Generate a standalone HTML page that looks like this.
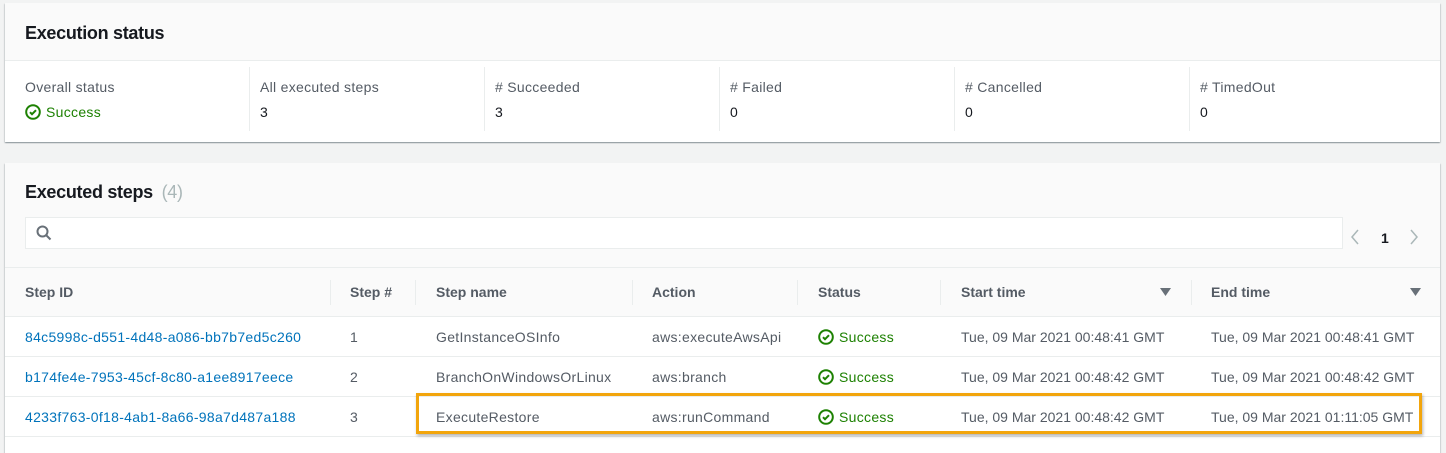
<!DOCTYPE html>
<html><head><style>
*{box-sizing:border-box;margin:0;padding:0}
body{width:1446px;height:442px;background:#f2f3f3;font-family:"Liberation Sans",sans-serif;font-size:14px;color:#16191f;position:relative;overflow:hidden;letter-spacing:0.3px}
.a{position:absolute}
.p{position:absolute;left:5px;width:1435px;background:#fff;box-shadow:0 1px 1px rgba(0,28,36,.3),1px 1px 1px rgba(0,28,36,.1),-1px 1px 1px rgba(0,28,36,.1)}
h2{font-size:18px;font-weight:bold;position:absolute;letter-spacing:-0.3px}
.lbl{color:#545b64}
.div{position:absolute;width:1px;background:#eaeded}
.th{position:absolute;top:284px;font-weight:bold;color:#545b64;letter-spacing:0}
.td{position:absolute;color:#545b64}
.dt{letter-spacing:0}
.g{color:#1d8102}
.lnk{color:#0073bb}
.hl{position:absolute;left:0;width:1435px;height:1px;background:#eaeded}
</style></head><body>
<div class="p" style="top:3px;height:139px">
 <div class="a" style="left:0;top:0;width:1435px;height:58px;background:#fafafa;border-bottom:1px solid #eaeded"></div>
 <h2 style="left:20px;top:20px">Execution status</h2>
 <div class="div" style="left:244px;top:64px;height:64px"></div>
 <div class="div" style="left:479px;top:64px;height:64px"></div>
 <div class="div" style="left:714px;top:64px;height:64px"></div>
 <div class="div" style="left:949px;top:64px;height:64px"></div>
 <div class="div" style="left:1184px;top:64px;height:64px"></div>
</div>
<div class="a lbl" style="left:25px;top:79px">Overall status</div>
<div class="a g" style="left:25px;top:104px"><svg width="16" height="16" viewBox="0 0 16 16" style="vertical-align:-3px;margin-right:5px"><circle cx="8" cy="8" r="6.8" fill="none" stroke="#1d8102" stroke-width="2"/><path d="M5 8.2l2 2 4-4" fill="none" stroke="#1d8102" stroke-width="2"/></svg>Success</div>
<div class="a lbl" style="left:260px;top:79px">All executed steps</div><div class="a" style="left:260px;top:104px">3</div>
<div class="a lbl" style="left:495px;top:79px"># Succeeded</div><div class="a" style="left:495px;top:104px">3</div>
<div class="a lbl" style="left:730px;top:79px"># Failed</div><div class="a" style="left:730px;top:104px">0</div>
<div class="a lbl" style="left:965px;top:79px"># Cancelled</div><div class="a" style="left:965px;top:104px">0</div>
<div class="a lbl" style="left:1200px;top:79px"># TimedOut</div><div class="a" style="left:1200px;top:104px">0</div>

<div class="p" style="top:163px;height:290px">
 <div class="a" style="left:0;top:0;width:1435px;height:153px;background:#fafafa"></div>
 <div class="hl" style="top:104px"></div>
 <div class="hl" style="top:153px"></div>
 <div class="hl" style="top:193px"></div>
 <div class="hl" style="top:233px"></div>
 <div class="hl" style="top:273px"></div>
 <h2 style="left:20px;top:19px">Executed steps <span style="font-weight:normal;color:#aab7b8;margin-left:4px">(4)</span></h2>
 <div class="a" style="left:20px;top:54px;width:1318px;height:32px;background:#fff;border:1px solid #eaeded"></div>
 <div class="div" style="left:325px;top:117px;height:25px"></div>
 <div class="div" style="left:410px;top:117px;height:25px"></div>
 <div class="div" style="left:627px;top:117px;height:25px"></div>
 <div class="div" style="left:792px;top:117px;height:25px"></div>
 <div class="div" style="left:935px;top:117px;height:25px"></div>
 <div class="div" style="left:1186px;top:117px;height:25px"></div>
</div>
<svg class="a" style="left:36px;top:225px" width="16" height="16" viewBox="0 0 16 16"><circle cx="6.5" cy="6.5" r="5" fill="none" stroke="#687078" stroke-width="2"/><path d="M10 10l4.5 4.5" stroke="#687078" stroke-width="2"/></svg>
<svg class="a" style="left:1349px;top:229px" width="12" height="16" viewBox="0 0 12 16"><path d="M9 1L3 8l6 7" fill="none" stroke="#aab7b8" stroke-width="1.5"/></svg>
<div class="a" style="left:1381px;top:230px;font-weight:bold">1</div>
<svg class="a" style="left:1408px;top:229px" width="12" height="16" viewBox="0 0 12 16"><path d="M3 1l6 7-6 7" fill="none" stroke="#aab7b8" stroke-width="1.5"/></svg>

<div class="th" style="left:25px">Step ID</div>
<div class="th" style="left:350px">Step #</div>
<div class="th" style="left:436px">Step name</div>
<div class="th" style="left:652px">Action</div>
<div class="th" style="left:818px">Status</div>
<div class="th" style="left:961px">Start time</div>
<div class="th" style="left:1211px">End time</div>
<svg class="a" style="left:1160px;top:288px" width="11" height="8"><path d="M0 0h11L5.5 8z" fill="#687078"/></svg>
<svg class="a" style="left:1410px;top:288px" width="11" height="8"><path d="M0 0h11L5.5 8z" fill="#687078"/></svg>

<div class="td lnk" style="left:25px;top:329px">84c5998c-d551-4d48-a086-bb7b7ed5c260</div>
<div class="td" style="left:350px;top:329px">1</div>
<div class="td" style="left:436px;top:329px">GetInstanceOSInfo</div>
<div class="td" style="left:652px;top:329px">aws:executeAwsApi</div>
<div class="td dt" style="left:961px;top:329px">Tue, 09 Mar 2021 00:48:41 GMT</div>
<div class="td dt" style="left:1211px;top:329px">Tue, 09 Mar 2021 00:48:41 GMT</div>

<div class="td lnk" style="left:25px;top:369px">b174fe4e-7953-45cf-8c80-a1ee8917eece</div>
<div class="td" style="left:350px;top:369px">2</div>
<div class="td" style="left:436px;top:369px">BranchOnWindowsOrLinux</div>
<div class="td" style="left:652px;top:369px">aws:branch</div>
<div class="td dt" style="left:961px;top:369px">Tue, 09 Mar 2021 00:48:42 GMT</div>
<div class="td dt" style="left:1211px;top:369px">Tue, 09 Mar 2021 00:48:42 GMT</div>

<div class="td lnk" style="left:25px;top:409px">4233f763-0f18-4ab1-8a66-98a7d487a188</div>
<div class="td" style="left:350px;top:409px">3</div>
<div class="td" style="left:436px;top:409px">ExecuteRestore</div>
<div class="td" style="left:652px;top:409px">aws:runCommand</div>
<div class="td dt" style="left:961px;top:409px">Tue, 09 Mar 2021 00:48:42 GMT</div>
<div class="td dt" style="left:1211px;top:409px">Tue, 09 Mar 2021 01:11:05 GMT</div>

<div class="td g" style="left:818px;top:329px"><svg width="16" height="16" viewBox="0 0 16 16" style="vertical-align:-3px;margin-right:5px"><circle cx="8" cy="8" r="6.8" fill="none" stroke="#1d8102" stroke-width="2"/><path d="M5 8.2l2 2 4-4" fill="none" stroke="#1d8102" stroke-width="2"/></svg>Success</div>
<div class="td g" style="left:818px;top:369px"><svg width="16" height="16" viewBox="0 0 16 16" style="vertical-align:-3px;margin-right:5px"><circle cx="8" cy="8" r="6.8" fill="none" stroke="#1d8102" stroke-width="2"/><path d="M5 8.2l2 2 4-4" fill="none" stroke="#1d8102" stroke-width="2"/></svg>Success</div>
<div class="td g" style="left:818px;top:409px"><svg width="16" height="16" viewBox="0 0 16 16" style="vertical-align:-3px;margin-right:5px"><circle cx="8" cy="8" r="6.8" fill="none" stroke="#1d8102" stroke-width="2"/><path d="M5 8.2l2 2 4-4" fill="none" stroke="#1d8102" stroke-width="2"/></svg>Success</div>

<div class="a" style="left:416px;top:393px;width:1006px;height:41px;border:3px solid #f2a50c;box-shadow:1px 2px 3px rgba(0,0,0,.3)"></div>
</body></html>
